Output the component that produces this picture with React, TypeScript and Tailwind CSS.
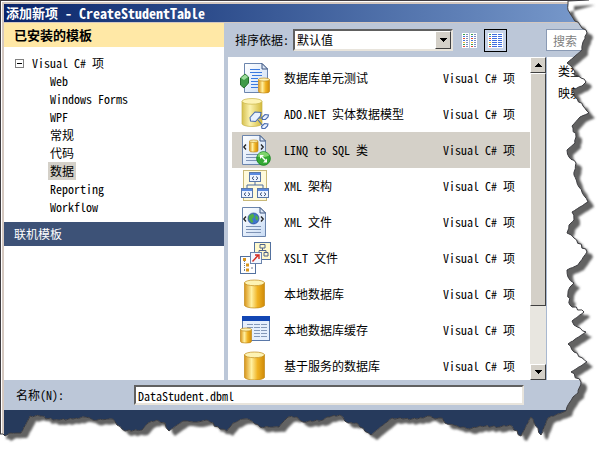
import React from "react";

const categories = ["Web", "Windows Forms", "WPF", "常规", "代码", "数据", "Reporting", "Workflow"];

const templates = [
  { name: "数据库单元测试", icon: "test" },
  { name: "ADO.NET 实体数据模型", icon: "entity" },
  { name: "LINQ to SQL 类", icon: "linq" },
  { name: "XML 架构", icon: "schema" },
  { name: "XML 文件", icon: "xml" },
  { name: "XSLT 文件", icon: "xslt" },
  { name: "本地数据库", icon: "db" },
  { name: "本地数据库缓存", icon: "cache" },
  { name: "基于服务的数据库", icon: "db" },
];

function Cylinder({ x, y, w, h, pale = false }: { x: number; y: number; w: number; h: number; pale?: boolean }) {
  const r = w / 2;
  const e = w / 7;
  return (
    <g stroke={pale ? "#c9b548" : "#c08a1a"} strokeWidth="0.7">
      <path
        d={`M${x} ${y + e} V${y + h - e} A${r} ${e} 0 0 0 ${x + w} ${y + h - e} V${y + e} Z`}
        fill={pale ? "url(#pale)" : "url(#gold)"}
      />
      <ellipse cx={x + r} cy={y + e} rx={r} ry={e} fill="#fdf3b4" />
    </g>
  );
}

function Sheet({ x = 5 }: { x?: number }) {
  return (
    <g transform={`translate(${x} 1)`}>
      <path d="M0.5 0.5 H18 L23.5 6 V29.5 H0.5 Z" fill="url(#paper)" stroke="#6a84ad" />
      <path d="M18 0.5 V6 H23.5 Z" fill="#dbe6f5" stroke="#3c5580" />
    </g>
  );
}

function SchemaBox({ x, y }: { x: number; y: number }) {
  return (
    <g transform={`translate(${x} ${y})`}>
      <rect x="0.5" y="0.5" width="11" height="9" fill="#eef4ff" stroke="#5a78a8" />
      <rect x="1" y="1" width="10" height="2" fill="#5b8ae0" />
      <path d="M5 4.5 L3 6.2 L5 8 M7 4.5 L9 6.2 L7 8" fill="none" stroke="#26406e" strokeWidth="0.9" />
    </g>
  );
}

function TemplateIcon({ kind }: { kind: string }) {
  return (
    <svg className="h-8 w-8 shrink-0" viewBox="0 0 32 32" aria-hidden="true">
      {kind === "test" && (
        <>
          <Sheet x={4} />
          <path d="M10 7.5 H20 M10 10.5 H22 M12 13.5 H22 M11 16.5 H18 M11 19.5 H18 M11 22.5 H18 M11 25.5 H18" stroke="#3b7ae0" />
          <path d="M0.5 16 L5 12 L8.5 15 V21 L4 26 L0.5 23 Z" fill="#3f9a48" stroke="#26702f" />
          <path d="M1 16 L5 12.5 L8 15 L4 18 Z" fill="#9bdc9b" />
          <Cylinder x={18.5} y={16} w={11} h={15} />
        </>
      )}
      {kind === "entity" && (
        <>
          <Cylinder x={2} y={0.5} w={20} h={28} pale />
          <g fill="#e9f1ff" stroke="#4a6cae" strokeWidth="1.1">
            <path d="M19 20 H24 M18 22 L23 28" fill="none" />
            <path d="M10 19.5 L15 14 L21 14.5 L20.5 18 L15.5 23.5 L10.5 23 Z" />
            <path d="M22 19.5 L25 16.5 L28.5 17 L28 19 L25.5 21.5 L22.5 21.5 Z M21.5 28.5 L24.5 25.5 L28 26 L27.5 28 L25 30.5 L22 30.5 Z" />
          </g>
        </>
      )}
      {(kind === "linq" || kind === "xml") && (
        <>
          <Sheet x={2} />
          <path d="M6 20.5 H21 M6 23.5 H21 M6 26.5 H21" stroke="#7e93b6" />
          <path d="M6 10.5 L3.8 13 L6 15.5 M21 10.5 L23.2 13 L21 15.5" fill="none" stroke="#222" strokeWidth="1.3" />
        </>
      )}
      {kind === "linq" && (
        <>
          <Cylinder x={9.5} y={6} w={8.5} h={12} />
          <circle cx="23.5" cy="24.5" r="6.8" fill="#35a935" stroke="#1c8a24" />
          <path d="M17.3 22.5 A6.5 6.5 0 0 1 29.3 21.5 Q24 24.5 17.3 22.5" fill="#7fd46c" />
          <path d="M20 21 H24 L20 25 Z M27 28.5 H23 L27 24.5 Z" fill="#fff" />
          <path d="M22 23 L25.5 26.5" stroke="#fff" strokeWidth="1.4" />
        </>
      )}
      {kind === "xml" && (
        <>
          <circle cx="13.5" cy="12.5" r="5.5" fill="#3f74cf" stroke="#294d91" strokeWidth="0.7" />
          <path d="M9 9.5 L13 7.5 L14.5 10.5 L12 13 L13.5 16 L11.5 17 L8.5 13 Z M16 8.5 L18.5 12 L17 15 L15 12 Z" fill="#4fae48" />
        </>
      )}
      {kind === "schema" && (
        <>
          <rect x="3.5" y="0.5" width="23" height="30" fill="#fffadb" stroke="#c8b878" />
          <path d="M15 12 V15 M7 19 V15 H23 V19" fill="none" stroke="#4c6ca0" />
          <SchemaBox x={9} y={2} />
          <SchemaBox x={1} y={18} />
          <SchemaBox x={17} y={18} />
        </>
      )}
      {kind === "xslt" && (
        <>
          <rect x="14.5" y="0.5" width="16" height="17" fill="#fff9cc" stroke="#53719f" />
          <path d="M20 2.5 H25 V6 H20 Z M17 10.5 H21 V14 H17 Z M24 10.5 H28 V14 H24 Z M22.5 6 V8.5 M19 10 V8.5 H26 V10" fill="none" stroke="#4c628c" />
          <rect x="0.5" y="14.5" width="15" height="17" fill="#fff" stroke="#53719f" />
          <path d="M4.5 19 V29 M4 23.5 H7 M4 28.5 H7" stroke="#6f7d92" strokeDasharray="1 1" />
          <path d="M3 16 h3 v3 h-3z M6 21.5 h3 v3 h-3z M6 26.5 h3 v3 h-3z" fill="#d9951a" />
          <path d="M11 26 H13" stroke="#6f7d92" />
          <rect x="10.5" y="10.5" width="11" height="11" fill="#f2f7ff" stroke="#6a84ad" />
          <path d="M12.5 19.5 L18 13.5 M15 13 H19 V17" fill="none" stroke="#d32d22" strokeWidth="1.4" />
        </>
      )}
      {kind === "db" && <Cylinder x={4.5} y={2} w={20} h={28} />}
      {kind === "cache" && (
        <>
          <rect x="2.5" y="2.5" width="27" height="24" fill="#e6effd" stroke="#5a78a8" />
          <rect x="2" y="2" width="28" height="5" fill="#1246b4" />
          <path d="M7 10.5 H27 M7 13.5 H27 M14 16.5 H27 M14 19.5 H27 M14 22.5 H27" stroke="#8498b8" strokeDasharray="6 1" />
          <Cylinder x={0.5} y={14} w={11} h={15} />
        </>
      )}
    </svg>
  );
}

function ViewIcon({ details }: { details: boolean }) {
  const colors = ["#38a048", "#4a74d8", "#e04a38", "#4a74d8", "#e8b838", "#38a048", "#e04a38"];
  return (
    <svg className="h-[15px] w-[15px]" viewBox="0 0 15 15" shapeRendering="crispEdges" aria-hidden="true">
      <rect width="15" height="15" fill="#fff" />
      {!details && <rect x="7" width="1" height="15" fill="#bcc7d8" />}
      {colors.map((color, i) => {
        const y = i * 2 + 1;
        return (
          <g key={y}>
            <rect x="1" y={y} width="2" height="1" fill={color} />
            {details ? (
              <>
                <rect x="4" y={y} width="5" height="1" fill="#3f6fe0" />
                <rect x="10" y={y} width="4" height="1" fill="#3f6fe0" />
              </>
            ) : (
              <>
                <rect x="4" y={y} width="2" height="1" fill="#7a8cc0" />
                <rect x="9" y={y} width="2" height="1" fill={color} />
                <rect x="12" y={y} width="2" height="1" fill="#7a8cc0" />
              </>
            )}
          </g>
        );
      })}
    </svg>
  );
}

function Arrow({ up = false }: { up?: boolean }) {
  return (
    <svg className="h-1 w-[7px]" viewBox="0 0 7 4" shapeRendering="crispEdges" aria-hidden="true">
      <path d={up ? "M0 4 H7 L3.5 0 Z" : "M0 0 H7 L3.5 4 Z"} />
    </svg>
  );
}

const raised = "border border-t-white border-l-white border-r-[#404040] border-b-[#404040] bg-[#d4d0c8]";

const edge: [number, number][] = [
  [589, 0], [568, 1], [568, 10], [571, 15], [573, 18], [580, 25], [586, 30], [587, 33], [583, 42], [582, 50],
  [574, 57], [567, 63], [572, 67], [575, 72], [574, 75], [581, 78], [586, 82], [582, 86], [572, 90], [575, 97],
  [583, 106], [589, 113], [580, 117], [572, 126], [573, 128], [576, 137], [575, 143], [567, 150], [569, 157],
  [576, 163], [574, 175], [579, 187], [588, 202], [572, 212], [574, 220], [569, 225], [567, 233], [574, 238],
  [587, 252], [578, 265], [567, 270], [568, 277], [574, 283], [570, 287], [568, 293], [570, 305], [584, 312],
  [572, 321], [574, 325], [586, 332], [568, 344], [574, 352], [587, 362], [571, 372], [581, 382], [578, 393],
  [573, 397], [567, 407], [566, 411], [548, 418], [541, 435], [531, 417], [521, 436], [510, 425], [500, 427],
  [480, 426], [470, 429], [457, 426], [445, 423], [442, 418], [435, 419], [430, 416], [417, 419], [403, 419],
  [392, 418], [383, 425], [371, 435], [360, 427], [357, 423], [348, 423], [340, 415], [327, 417], [323, 420],
  [303, 422], [297, 417], [288, 417], [282, 423], [279, 427], [260, 427], [250, 420], [243, 419], [233, 423],
  [227, 431], [220, 429], [210, 422], [207, 420], [197, 422], [183, 421], [177, 425], [169, 431], [165, 423],
  [157, 420], [148, 423], [142, 430], [125, 431], [117, 425], [113, 419], [93, 420], [85, 417], [73, 419],
  [53, 420], [40, 416], [30, 416], [27, 422], [21, 433], [10, 433], [5, 436], [3, 434], [0, 434],
];

// Splits the long runs and nudges the new points so the tear looks rough.
function roughen(points: [number, number][]) {
  const out: string[] = [];
  points.forEach(([x, y], i) => {
    out.push(`${x} ${y}`);
    const next = points[i + 1];
    if (!next || i === 0) return;
    const steps = Math.floor(Math.hypot(next[0] - x, next[1] - y) / 3);
    for (let s = 1; s < steps; s++) {
      const t = s / steps;
      const n = Math.sin(i * 12.9 + s * 78.2);
      out.push(`${(x + (next[0] - x) * t + n * 0.8).toFixed(1)} ${(y + (next[1] - y) * t - n * 0.8).toFixed(1)}`);
    }
  });
  return "M" + out.join(" L");
}

function TornEdge() {
  const line = roughen(edge);
  const outside = `${line} V458 H611 V0 Z`;
  return (
    <svg
      className="pointer-events-none absolute inset-0 h-full w-full"
      viewBox="0 0 611 458"
      preserveAspectRatio="none"
      aria-hidden="true"
    >
      <defs>
        <clipPath id="outside">
          <path d={outside} />
        </clipPath>
        <filter id="soft">
          <feGaussianBlur stdDeviation="1.3" />
        </filter>
      </defs>
      <path d={outside} fill="#fff" />
      <g clipPath="url(#outside)">
        <path d={`${line} L3 420 V400 L560 8 Z`} transform="translate(6 5)" fill="#626262" filter="url(#soft)" />
      </g>
      <path d={line} fill="none" stroke="#3c3c40" />
    </svg>
  );
}

export default function App() {
  return (
    <div className="relative flex min-h-screen flex-col overflow-hidden bg-[#263a5c] font-['Noto_Sans_CJK_SC',sans-serif] text-xs leading-[18px] text-black [font-feature-settings:'hwid','liga'_0]">
      <svg className="absolute h-0 w-0" aria-hidden="true">
        <defs>
          <linearGradient id="gold">
            <stop offset="0" stopColor="#d9951a" />
            <stop offset="0.35" stopColor="#fff0a0" />
            <stop offset="0.65" stopColor="#f0b323" />
            <stop offset="1" stopColor="#d08a08" />
          </linearGradient>
          <linearGradient id="pale">
            <stop offset="0" stopColor="#d6c04e" />
            <stop offset="0.4" stopColor="#fbf3b0" />
            <stop offset="1" stopColor="#d3b93a" />
          </linearGradient>
          <linearGradient id="paper" x2="1" y2="1">
            <stop offset="0" stopColor="#fff" />
            <stop offset="1" stopColor="#c9dcf5" />
          </linearGradient>
        </defs>
      </svg>
      <div className="flex flex-1 flex-col border-t border-l border-[#403c40]">
        <div className="flex flex-1 flex-col border-t border-l border-white">
          <div className="flex flex-1 flex-col border-t-2 border-l-2 border-[#d4c8c0]">
            <header className="flex h-[19px] items-center overflow-hidden border-b border-[#d4c8c0] bg-linear-to-r from-[#0a246a] to-[#7e9fd0] pl-0.5 font-bold whitespace-pre text-white">
              <span className="text-[13px]">添加新项</span>
              <span className="text-sm"> - CreateStudentTable</span>
            </header>
            <div className="flex bg-[#bcc7d8]">
              <nav className="w-[220px] shrink-0 bg-white">
                <h2 className="flex h-6 items-center bg-[#ffe8a6] pl-2.5 text-[13px] font-bold">已安装的模板</h2>
                <div className="flex items-center pt-[7px] pl-[11px]">
                  <svg className="h-[9px] w-[9px]" viewBox="0 0 9 9" shapeRendering="crispEdges" aria-hidden="true">
                    <rect x="0.5" y="0.5" width="8" height="8" fill="#fff" stroke="#808080" />
                    <path d="M2 4.5 H7" stroke="#000" />
                  </svg>
                  <span className="pl-2">Visual C# 项</span>
                </div>
                <ul className="flex flex-col items-start pb-1.5 pl-11">
                  {categories.map((c) => (
                    <li key={c} className={c === "数据" ? "bg-[#d4d0c8] px-0.5" : "px-0.5"}>
                      {c}
                    </li>
                  ))}
                </ul>
                <h2 className="flex h-6 items-center bg-[#3d5277] pl-2.5 text-white">联机模板</h2>
              </nav>
              <main className="flex min-w-0 flex-1 flex-col pl-1">
                <div className="flex h-[34px] items-center pl-[7px]">
                  <label htmlFor="sort">排序依据:</label>
                  <div className="relative ml-1 w-40">
                    <select
                      id="sort"
                      className="block h-[22px] w-full appearance-none border-2 border-t-[#606060] border-r-[#e8e4dc] border-b-[#e8e4dc] border-l-[#606060] bg-white pl-0.5"
                    >
                      <option>默认值</option>
                    </select>
                    <span className={`pointer-events-none absolute top-0.5 right-0.5 flex h-[18px] w-4 items-center justify-center ${raised}`}>
                      <Arrow />
                    </span>
                  </div>
                  <button className="ml-[9px]" aria-label="小图标">
                    <ViewIcon details={false} />
                  </button>
                  <button className="ml-[7px] flex h-[23px] w-[23px] items-center justify-center border border-black bg-[#c8d4e8]" aria-label="中等图标">
                    <ViewIcon details />
                  </button>
                  <input
                    className="ml-[39px] h-[22px] min-w-0 flex-1 border border-[#8a9ab4] bg-white pl-1.5 placeholder:text-[#808080]"
                    placeholder="搜索"
                    aria-label="搜索"
                  />
                </div>
                <div className="flex h-[323px]">
                  <ul className="flex-1 overflow-hidden bg-white pt-[3px] pl-1">
                    {templates.map((t) => (
                      <li
                        key={t.name}
                        className={`flex h-9 items-center pr-[15px] pl-2 ${t.icon === "linq" ? "bg-[#d4d0c8]" : ""}`}
                      >
                        <TemplateIcon kind={t.icon} />
                        <span className="flex-1 pl-3">{t.name}</span>
                        <span>Visual C# 项</span>
                      </li>
                    ))}
                  </ul>
                  <div className="flex w-4 flex-col bg-[#e8e6e0]">
                    <button className={`flex h-4 items-center justify-center ${raised}`} aria-label="向上滚动">
                      <Arrow up />
                    </button>
                    <div className={`h-[233px] ${raised}`} />
                    <button className={`mt-auto flex h-4 items-center justify-center ${raised}`} aria-label="向下滚动">
                      <Arrow />
                    </button>
                  </div>
                  <aside className="w-[65px] border-l border-[#a8b8d0] bg-white pt-[5px] pl-[11px]">
                    <p>类型:</p>
                    <p className="pt-1">映射到</p>
                  </aside>
                </div>
              </main>
            </div>
            <div className="flex h-[30px] items-center bg-[#bcc7d8] pl-3">
              <label htmlFor="name" className="w-[118px]">
                名称(N):
              </label>
              <input
                id="name"
                defaultValue="DataStudent.dbml"
                className="mr-[87px] h-5 min-w-0 flex-1 border-2 border-t-[#606060] border-r-[#e8e4dc] border-b-[#e8e4dc] border-l-[#606060] bg-white pl-0.5"
              />
            </div>
          </div>
        </div>
      </div>
      <TornEdge />
    </div>
  );
}
